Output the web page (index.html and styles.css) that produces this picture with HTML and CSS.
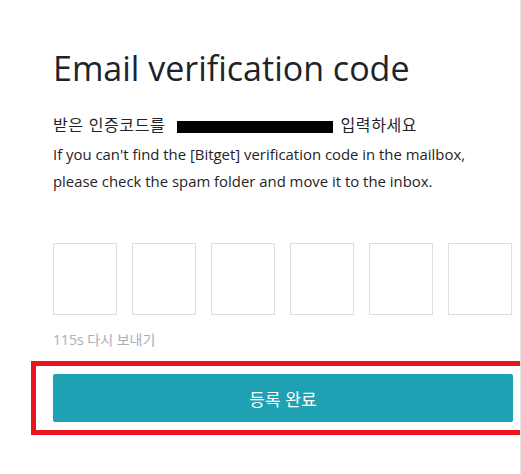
FILE: index.html
```html
<!DOCTYPE html>
<html lang="ko">
<head>
<meta charset="utf-8">
<link rel="stylesheet" href="styles.css">
</head>
<body>
<div class="page">
  <h1 class="title">Email verification code</h1>
  <p class="lead">받은 인증코드를 <span class="redact"></span> 입력하세요</p>
  <p class="hint">If you can't find the [Bitget] verification code in the mailbox,<br>please check the spam folder and move it to the inbox.</p>
  <div class="codes">
    <div class="cell"></div>
    <div class="cell"></div>
    <div class="cell"></div>
    <div class="cell"></div>
    <div class="cell"></div>
    <div class="cell"></div>
  </div>
  <p class="resend">115s 다시 보내기</p>
  <div class="mark">
    <button class="submit">등록 완료</button>
  </div>
</div>
</body>
</html>
```
FILE: styles.css
```css
html, body {
  margin: 0;
  padding: 0;
  background: #fff;
  overflow: hidden;
}
body {
  width: 521px;
  height: 474px;
  font-family: "Open Sans", "Noto Sans CJK KR", sans-serif;
  font-variant-ligatures: none;
  color: #1f2329;
}
.page {
  width: 521px;
  height: 474px;
  border-right: 1px solid #e6e6e6;
  padding-top: 46px;
  box-sizing: border-box;
  overflow: hidden;
}
.title {
  margin: 0 0 0 53px;
  font-size: 34px;
  font-weight: 400;
  line-height: 44px;
  color: #1e2329;
}
.lead {
  margin: 21px 0 0 53px;
  font-size: 16px;
  letter-spacing: 0.6px;
  line-height: 26px;
  font-family: "Noto Sans CJK KR", sans-serif;
}
.redact {
  display: inline-block;
  width: 156px;
  height: 12px;
  background: #000;
  vertical-align: -2px;
  margin: 0 2px 0 7px;
}
.hint {
  margin: 4px 0 0 53px;
  font-size: 14.9px;
  line-height: 27px;
}
.codes {
  display: flex;
  gap: 15px;
  margin: 48px 0 0 53px;
}
.cell {
  width: 64px;
  height: 72px;
  box-sizing: border-box;
  border: 1px solid #dcdee2;
  flex: none;
}
.resend {
  margin: 15px 0 0 53px;
  font-size: 14px;
  line-height: 20px;
  color: #a7adbb;
}
.mark {
  margin: 11px 0 0 31px;
  width: 520px;
  border: 5px solid #e8151f;
  border-right: none;
  padding: 8px 0 8px 17px;
}
.submit {
  display: block;
  width: 460px;
  height: 48px;
  border: none;
  border-radius: 2px;
  background: #1fa1b4;
  color: #fff;
  font-family: "Noto Sans CJK KR", sans-serif;
  font-size: 17px;
  padding: 0;
}
```
